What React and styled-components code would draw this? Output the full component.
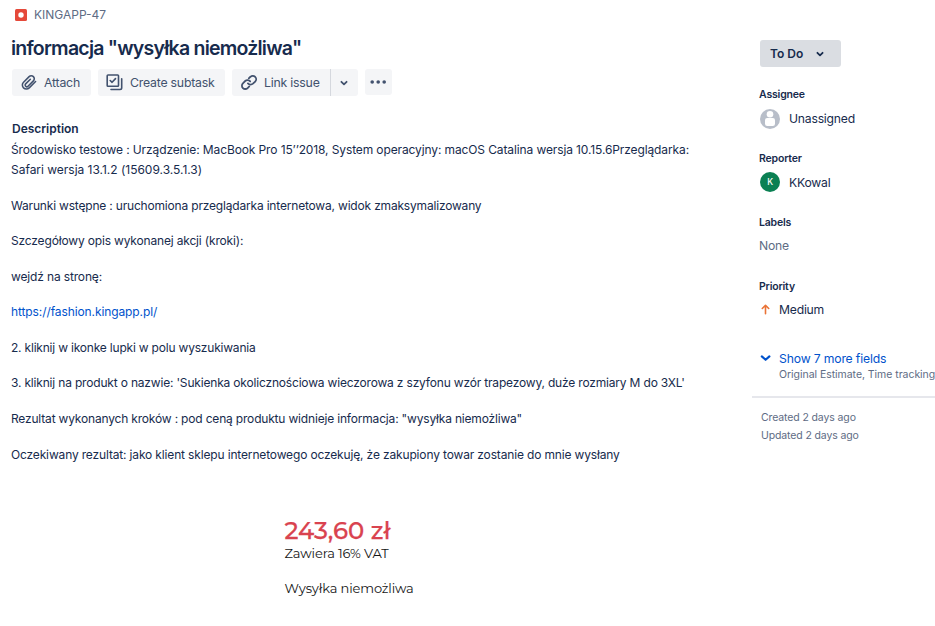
import React from "react";
import styled, { createGlobalStyle } from "styled-components";

const Global = createGlobalStyle`
  * { box-sizing: border-box; }
  body { margin: 0; background: #fff; overflow: hidden; }
`;

const Page = styled.div`
  display: grid;
  grid-template-columns: 752px 1fr;
  width: 935px;
  height: 626px;
  overflow: hidden;
  color: #172b4d;
  font-family: Inter, "Liberation Sans", sans-serif;
  font-size: 12px;
  white-space: nowrap;
  svg { display: block; flex: none; }
`;

const Main = styled.main`
  padding-left: 11px;
`;

const Breadcrumb = styled.div`
  display: flex;
  align-items: center;
  gap: 7px;
  height: 30px;
  padding-left: 4px;
  color: #5e6c84;
  font-size: 12px;
`;

const IssueKey = styled.span`
  height: 16px;
  line-height: 16px;
`;

const Title = styled.h1`
  margin: 5px 0 0;
  height: 26px;
  line-height: 26px;
  font-size: 19.5px;
  font-weight: 600;
  letter-spacing: -0.77px;
`;

const Toolbar = styled.div`
  display: flex;
  gap: 7px;
  margin: 8px 0 0 1px;
`;

const Button = styled.button`
  display: flex;
  align-items: center;
  justify-content: ${(p) => (p.$iconOnly ? "center" : "flex-start")};
  gap: 7px;
  width: ${(p) => p.$width}px;
  height: ${(p) => p.$height || 27}px;
  padding: ${(p) => (p.$iconOnly ? "0 1px 0 0" : "0 0 0 8px")};
  border: 0;
  border-radius: ${(p) => p.$radius || "3px"};
  background: #f4f5f7;
  color: #42526e;
  font: 400 12.3px Inter, sans-serif;
  letter-spacing: -0.22px;
`;

const SplitButton = styled.div`
  display: flex;
  gap: 1px;
  background: linear-gradient(#d5d8de, #d5d8de) 98px 0 / 1px 100% no-repeat;
`;

const Heading = styled.h2`
  margin: 23px 0 0 1px;
  height: 20px;
  line-height: 20px;
  font-size: 12px;
  font-weight: 600;
  letter-spacing: -0.02px;
`;

const Description = styled.div`
  display: flex;
  flex-direction: column;
  gap: 15.57px;
  margin-top: 1px;
  line-height: 20px;
`;

const Paragraph = styled.p`
  margin: 0;
  letter-spacing: ${(p) => p.$spacing || 0}px;
`;

const Line = styled.span`
  display: block;
  letter-spacing: ${(p) => p.$spacing || 0}px;
`;

const Link = styled.a`
  color: #0052cc;
  text-decoration: none;
`;

const Attachment = styled.figure`
  margin: 52px 0 0 273.5px;
  color: #151515;
  font-family: Montserrat, Lato, sans-serif;
`;

const Price = styled.div`
  height: 27px;
  line-height: 27px;
  color: #d9434f;
  font-size: 24.3px;
  font-weight: 500;
  -webkit-text-stroke: 0.25px #d9434f;
`;

const Note = styled.div`
  height: 18px;
  line-height: 18px;
  margin-top: ${(p) => p.$top || 0}px;
  font-size: 13px;
  letter-spacing: -0.13px;
`;

const Aside = styled.aside`
  padding-top: 40px;
  min-width: 0;
`;

const Status = styled.button`
  display: flex;
  align-items: center;
  gap: 13px;
  width: 81px;
  height: 27px;
  margin: 0 0 0 8px;
  padding: 0 0 0 10px;
  border: 0;
  border-radius: 3px;
  background: #dadde2;
  color: #172b4d;
  font: 600 12px Inter, sans-serif;
`;

const Fields = styled.div`
  margin-top: 20px;
`;

const Field = styled.section`
  height: 64px;
  padding-left: 7px;
`;

const Label = styled.h3`
  margin: 0;
  height: 16px;
  line-height: 16px;
  font-size: 10.5px;
  font-weight: 600;
  letter-spacing: -0.18px;
`;

const Value = styled.div`
  display: flex;
  align-items: center;
  gap: 9px;
  height: 20px;
  margin-top: ${(p) => p.$top || 6}px;
  padding-left: ${(p) => p.$indent || 0}px;
  color: ${(p) => (p.$muted ? "#5e6c84" : "inherit")};
  font-size: 12.2px;
  letter-spacing: -0.23px;
`;

const ValueText = styled.span`
  height: 16px;
  line-height: ${(p) => p.$line || 16}px;
`;

const Avatar = styled.span`
  display: flex;
  align-items: center;
  justify-content: center;
  width: 20px;
  height: 20px;
  border-radius: 50%;
  background: #0b8053;
  color: #fff;
  font-size: 8.5px;
  font-weight: 500;
`;

const More = styled.div`
  display: flex;
  gap: 8px;
  height: 55px;
  padding: 8px 0 0 7px;
  border-bottom: 2px solid #e6e7ec;
`;

const MoreText = styled.div`
  display: flex;
  flex-direction: column;
`;

const MoreTitle = styled.span`
  height: 16px;
  line-height: 16px;
  color: #0052cc;
  font-size: 12.2px;
  letter-spacing: -0.16px;
`;

const MoreHint = styled.span`
  height: 16px;
  line-height: 16px;
  color: #5e6c84;
  font-size: 10.5px;
  letter-spacing: -0.04px;
`;

const Dates = styled.div`
  padding: 11px 0 0 9px;
  color: #5e6c84;
  font-size: 10.5px;
  line-height: 18px;
  letter-spacing: -0.12px;
`;

const MoreChevron = styled.span`
  padding-top: 1px;
`;

const BugIcon = () => (
  <svg width="12" height="12" viewBox="0 0 12 12">
    <rect width="12" height="12" rx="1.5" fill="#e5493a" />
    <circle cx="6" cy="6" r="2.7" fill="#fff" />
  </svg>
);

const ClipIcon = () => (
  <svg width="17" height="17" viewBox="0 0 24 24" fill="none" stroke="#42526e" strokeWidth="2.2" strokeLinecap="round" strokeLinejoin="round">
    <path d="M22 10.6 13 19.6a5.6 5.6 0 0 1-8 0 5.6 5.6 0 0 1 0-8l7.9-7.9a4.2 4.2 0 0 1 6 0 4.2 4.2 0 0 1 0 6l-7.6 7.6a2.3 2.3 0 0 1-3.3-3.3l6.6-6.6" />
  </svg>
);

const SubtaskIcon = () => (
  <svg width="17" height="17" viewBox="0 0 17 17" fill="none" stroke="#42526e" strokeWidth="1.6" strokeLinecap="round" strokeLinejoin="round">
    <rect x="1.2" y="1" width="11.3" height="11.3" rx="0.8" />
    <path d="m4.2 6.5 1.9 1.8 3.4-3.7M15.7 4.8v9q0 1.7-1.7 1.7H5" />
  </svg>
);

const LinkIcon = () => (
  <svg width="17" height="17" viewBox="0 0 24 24" fill="none" stroke="#42526e" strokeWidth="2.5" strokeLinecap="round">
    <path d="M11.2 13.2a5 5 0 0 0 7.1.5l3.1-3.1a4.7 4.7 0 0 0-6.7-6.7l-2.3 2.2" />
    <path d="M14.4 10.5a5 5 0 0 0-7.1-.6l-3.2 3.2a4.7 4.7 0 0 0 6.7 6.7l2.3-2.2" />
  </svg>
);

const Chevron = () => (
  <svg width="8" height="8" viewBox="0 0 8 8" fill="none" stroke="currentColor" strokeWidth="1.8" strokeLinecap="round" strokeLinejoin="round">
    <path d="m1.4 2.8 2.6 2.5 2.6-2.5" />
  </svg>
);

const BlueChevron = () => (
  <svg width="12" height="12" viewBox="0 0 12 12" fill="none" stroke="#0052cc" strokeWidth="2.1" strokeLinecap="round" strokeLinejoin="round">
    <path d="M2.8 4.4 6.6 7.8l3.8-3.4" />
  </svg>
);

const DotsIcon = () => (
  <svg width="16" height="4" viewBox="0 0 16 4" fill="#42526e">
    <circle cx="2.2" cy="2" r="1.8" />
    <circle cx="8.2" cy="2" r="1.8" />
    <circle cx="14.2" cy="2" r="1.8" />
  </svg>
);

const PersonIcon = () => (
  <svg width="20" height="20" viewBox="0 0 20 20">
    <circle cx="10" cy="10" r="10" fill="#b8bec9" />
    <circle cx="10" cy="5.2" r="3.3" fill="#fff" />
    <rect x="5" y="9" width="10" height="8" rx="2.2" fill="#fff" />
  </svg>
);

const ArrowUpIcon = () => (
  <svg width="9" height="13" viewBox="0 0 9 13" fill="none" stroke="#ea7336" strokeWidth="1.6" strokeLinecap="round" strokeLinejoin="round">
    <path d="M4.5 9.7V1.5M1.3 4.5l3.2-3.2 3.2 3.2" />
  </svg>
);

export default function App() {
  return (
    <Page>
      <Global />
      <Main>
        <Breadcrumb><BugIcon /><IssueKey>KINGAPP-47</IssueKey></Breadcrumb>
        <Title>informacja "wysyłka niemożliwa"</Title>
        <Toolbar>
          <Button $width={79}><ClipIcon />Attach</Button>
          <Button $width={127}><SubtaskIcon />Create subtask</Button>
          <SplitButton>
            <Button $width={98} $radius="3px 0 0 3px"><LinkIcon />Link issue</Button>
            <Button $width={27} $iconOnly $radius="0 3px 3px 0" aria-label="Link options"><Chevron /></Button>
          </SplitButton>
          <Button $width={27} $height={26} $iconOnly aria-label="More actions"><DotsIcon /></Button>
        </Toolbar>
        <Heading>Description</Heading>
        <Description>
          <Paragraph>
            <Line $spacing={-0.115}>Środowisko testowe : Urządzenie: MacBook Pro 15’’2018, System operacyjny: macOS Catalina wersja 10.15.6Przeglądarka:</Line>
            <Line $spacing={-0.02}>Safari wersja 13.1.2 (15609.3.5.1.3)</Line>
          </Paragraph>
          <Paragraph $spacing={-0.185}>Warunki wstępne : uruchomiona przeglądarka internetowa, widok zmaksymalizowany</Paragraph>
          <Paragraph $spacing={-0.165}>Szczegółowy opis wykonanej akcji (kroki):</Paragraph>
          <Paragraph $spacing={-0.15}>wejdź na stronę:</Paragraph>
          <Paragraph $spacing={-0.1}><Link>https://fashion.kingapp.pl/</Link></Paragraph>
          <Paragraph $spacing={-0.2}>2. kliknij w ikonke lupki w polu wyszukiwania</Paragraph>
          <Paragraph $spacing={-0.18}>3. kliknij na produkt o nazwie: 'Sukienka okolicznościowa wieczorowa z szyfonu wzór trapezowy, duże rozmiary M do 3XL'</Paragraph>
          <Paragraph $spacing={-0.18}>Rezultat wykonanych kroków : pod ceną produktu widnieje informacja: "wysyłka niemożliwa"</Paragraph>
          <Paragraph $spacing={-0.153}>Oczekiwany rezultat: jako klient sklepu internetowego oczekuję, że zakupiony towar zostanie do mnie wysłany</Paragraph>
        </Description>
        <Attachment>
          <Price>243,60 zł</Price>
          <Note>Zawiera 16% VAT</Note>
          <Note $top={17}>Wysyłka niemożliwa</Note>
        </Attachment>
      </Main>
      <Aside>
        <Status>To Do<Chevron /></Status>
        <Fields>
          <Field><Label>Assignee</Label><Value $indent={1}><PersonIcon /><ValueText>Unassigned</ValueText></Value></Field>
          <Field><Label>Reporter</Label><Value $indent={1} $top={5}><Avatar>K</Avatar><ValueText $line={18}>KKowal</ValueText></Value></Field>
          <Field><Label>Labels</Label><Value $muted $top={5}><ValueText>None</ValueText></Value></Field>
          <Field><Label>Priority</Label><Value $indent={2} $top={5}><ArrowUpIcon /><ValueText>Medium</ValueText></Value></Field>
        </Fields>
        <More>
          <MoreChevron><BlueChevron /></MoreChevron>
          <MoreText>
            <MoreTitle>Show 7 more fields</MoreTitle>
            <MoreHint>Original Estimate, Time tracking</MoreHint>
          </MoreText>
        </More>
        <Dates>
          <div>Created 2 days ago</div>
          <div>Updated 2 days ago</div>
        </Dates>
      </Aside>
    </Page>
  );
}
